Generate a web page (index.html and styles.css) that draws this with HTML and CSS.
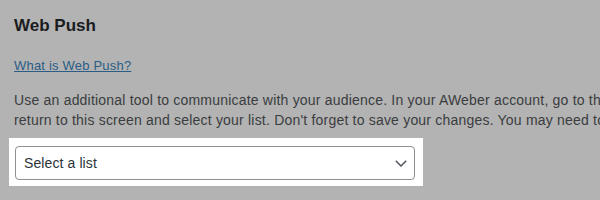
FILE: index.html
```html
<!DOCTYPE html>
<html>
<head>
<meta charset="utf-8">
<link rel="stylesheet" href="styles.css">
</head>
<body>
<div class="page">
  <h2 class="title">Web Push</h2>
  <p class="help"><a href="#" class="link">What is Web Push?</a></p>
  <p class="desc">Use an additional tool to communicate with your audience. In your AWeber account, go to the Web Push page, then<br>return to this screen and select your list. Don't forget to save your changes. You may need to refresh the page.</p>
  <div class="highlight">
    <div class="select">
      <span class="select-text">Select a list</span>
      <svg class="chevron" width="12" height="7" viewBox="0 0 12 7"><path d="M0.8 0.8 L6 6 L11.2 0.8" fill="none" stroke="#50575e" stroke-width="1.5"/></svg>
    </div>
  </div>
</div>
</body>
</html>
```
FILE: styles.css
```css
html, body {
  margin: 0;
  padding: 0;
  background: #b3b3b3;
  overflow: hidden;
  width: 600px;
  height: 200px;
}
.page {
  padding: 0 0 0 14px;
  font-family: "Liberation Sans", Arial, sans-serif;
  font-size: 13px;
  width: 1000px;
}
.title {
  margin: 0;
  padding-top: 16px;
  font-size: 17px;
  font-weight: bold;
  color: #1b1c1d;
  line-height: 20px;
}
.help {
  margin: 21px 0 0 0;
  line-height: 18px;
}
.link {
  color: #2a5c86;
  text-decoration: underline;
  letter-spacing: 0.2px;
}
.desc {
  margin: 15px 0 0 0;
  color: #3a3d40;
  line-height: 20px;
  white-space: nowrap;
  font-size: 14px;
  letter-spacing: 0.2px;
}
.highlight {
  margin: 8px 0 0 -5px;
  width: 400px;
  padding: 8px 8px 6px 6px;
  background: #fff;
}
.select {
  box-sizing: border-box;
  width: 400px;
  height: 34px;
  border: 1px solid #8c8f94;
  border-radius: 4px;
  display: flex;
  align-items: center;
  justify-content: space-between;
  padding: 0 7px 0 8px;
}
.select-text {
  color: #2c3338;
  font-size: 14px;
  letter-spacing: 0.1px;
}
.chevron {
  display: block;
}
```
